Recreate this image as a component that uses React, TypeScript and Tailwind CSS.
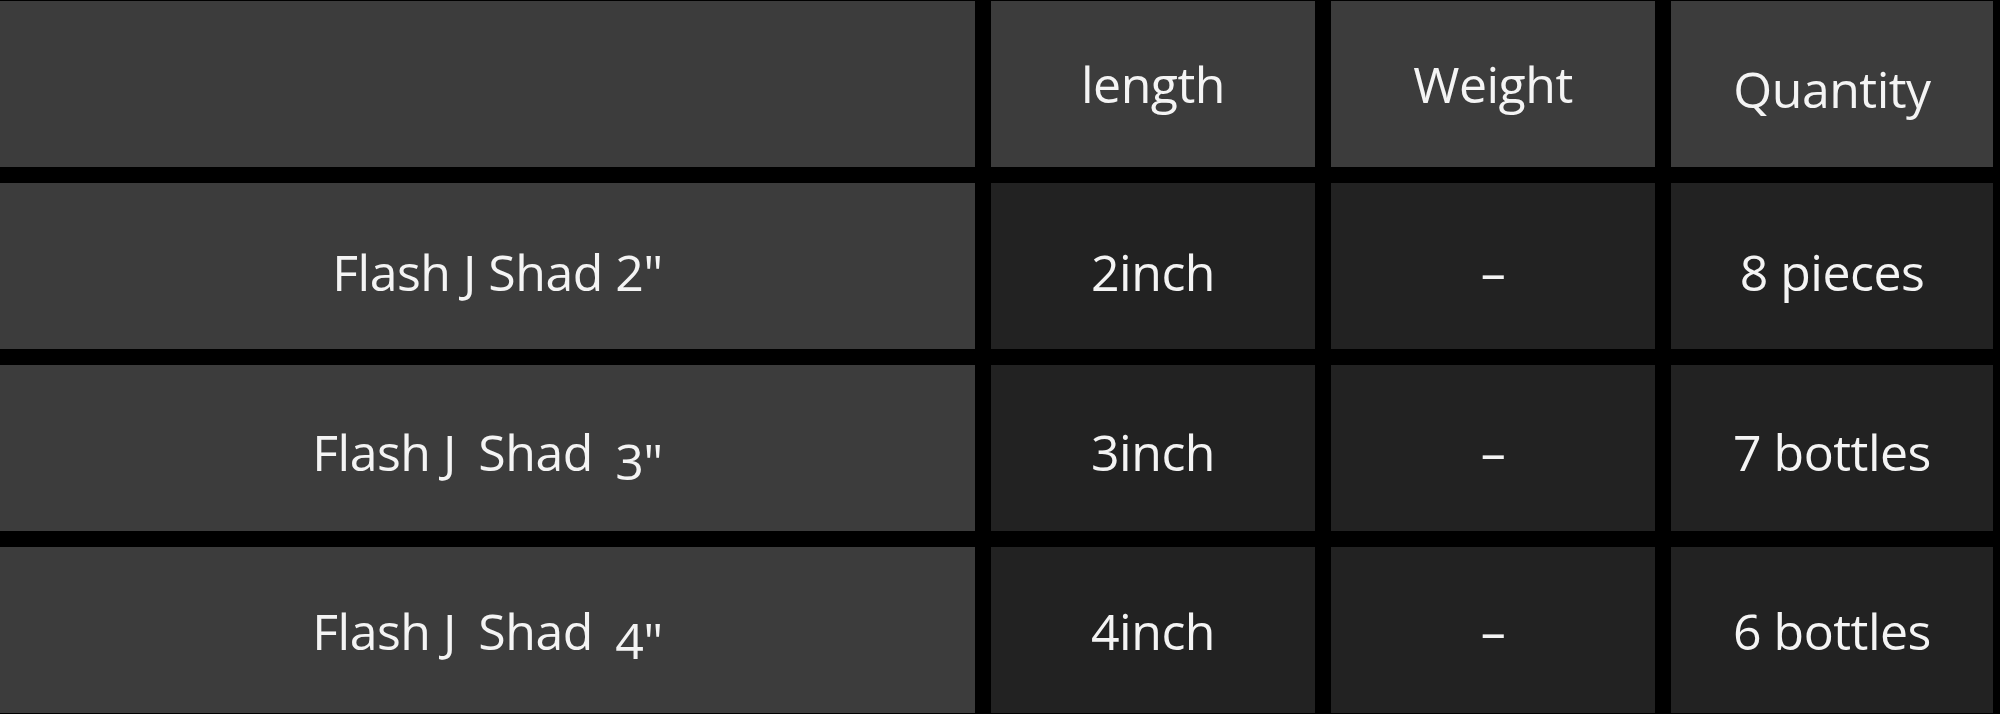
import React from 'react';

type Row = {
  name: React.ReactNode;
  length: string;
  weight: string;
  quantity: string;
  pad: string;
  namePad: string;
};

// lowered size mark, the reference sets the "3" and "4" below the line
const Size = ({ children }: { children: React.ReactNode }) => (
  <span className="ml-[10px] inline-block translate-y-[9px]">{children}</span>
);

const rows: Row[] = [
  {
    name: <>Flash J Shad 2"</>,
    length: '2inch',
    weight: '–',
    quantity: '8 pieces',
    pad: 'pt-[12px]',
    namePad: 'pl-[20px]',
  },
  {
    name: (
      <>
        Flash J <span className="ml-[10px]">Shad</span> <Size>3"</Size>
      </>
    ),
    length: '3inch',
    weight: '–',
    quantity: '7 bottles',
    pad: 'pt-[8px]',
    namePad: '',
  },
  {
    name: (
      <>
        Flash J <span className="ml-[10px]">Shad</span> <Size>4"</Size>
      </>
    ),
    length: '4inch',
    weight: '–',
    quantity: '6 bottles',
    pad: 'pt-[2px]',
    namePad: '',
  },
];

const cell = 'flex h-[166px] items-center justify-center whitespace-nowrap';

export default function App() {
  return (
    <div
      className="h-[714px] w-[2000px] bg-black pt-px text-[50px] leading-normal tracking-[-0.5px] text-[#f4f4f4]"
      style={{ fontFamily: '"Open Sans", "Noto Sans", sans-serif' }}
    >
      <div className="grid grid-cols-[975px_324px_324px_322px] gap-x-4 gap-y-4">
        <div className={`${cell} bg-[#3c3c3c]`} />
        <div className={`${cell} bg-[#3c3c3c]`}>length</div>
        <div className={`${cell} bg-[#3c3c3c]`}>Weight</div>
        <div className={`${cell} bg-[#3c3c3c] pt-[10px]`}>Quantity</div>

        {rows.map((r, i) => (
          <React.Fragment key={i}>
            <div className={`${cell} ${r.pad} ${r.namePad} bg-[#3c3c3c]`}>
              <span>{r.name}</span>
            </div>
            <div className={`${cell} ${r.pad} bg-[#222222]`}>{r.length}</div>
            <div className={`${cell} ${r.pad} bg-[#222222]`}>{r.weight}</div>
            <div className={`${cell} ${r.pad} bg-[#222222]`}>{r.quantity}</div>
          </React.Fragment>
        ))}
      </div>
    </div>
  );
}
